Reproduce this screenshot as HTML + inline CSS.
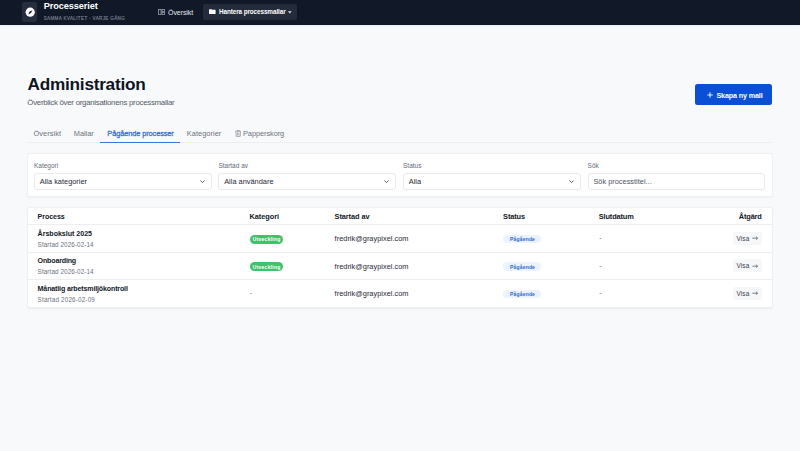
<!DOCTYPE html>
<html><head><meta charset="utf-8"><style>
html,body{margin:0;padding:0;width:800px;height:451px;overflow:hidden;background:#f8f9fb;font-family:"Liberation Sans",sans-serif;}
.t{position:absolute;white-space:nowrap;line-height:1;}
</style></head><body>
<div style="position:absolute;left:0;top:0;width:800px;height:25px;background:#111827;box-shadow:0 1px 2px rgba(0,0,0,0.06)"></div>
<div style="position:absolute;left:21.7px;top:2px;width:15.3px;height:19.7px;border-radius:2px;background:#262d3c"></div>
<svg style="position:absolute;left:24.5px;top:6.5px" width="10.5" height="10.5" viewBox="0 0 10.5 10.5">
<circle cx="5.2" cy="5.2" r="4.6" fill="#fff"/>
<path d="M3.2 7.4 L4.6 4.6 L7.4 3.2 L6 6 Z" fill="#1a2030"/>
</svg>
<svg style="position:absolute;left:158.3px;top:8.7px" width="7" height="6.2" viewBox="0 0 7 6.2">
<rect x="0.4" y="0.4" width="2.6" height="5.4" fill="none" stroke="#9aa1ae" stroke-width="0.8"/>
<rect x="4" y="0.4" width="2.6" height="2.3" fill="none" stroke="#9aa1ae" stroke-width="0.8"/>
<rect x="4" y="3.5" width="2.6" height="2.3" fill="none" stroke="#9aa1ae" stroke-width="0.8"/>
</svg>
<div style="position:absolute;left:202.8px;top:3.8px;width:94.1px;height:16.2px;border-radius:2px;background:#242b3a"></div>
<svg style="position:absolute;left:209.2px;top:9.3px" width="6.6" height="5" viewBox="0 0 7 6" preserveAspectRatio="none">
<path d="M0 0.8 Q0 0.2 0.6 0.2 L2.6 0.2 L3.4 1 L6.4 1 Q7 1 7 1.6 L7 5.4 Q7 6 6.4 6 L0.6 6 Q0 6 0 5.4 Z" fill="#ffffff"/>
</svg>
<svg style="position:absolute;left:287.5px;top:11px" width="4" height="3" viewBox="0 0 4 3"><path d="M0 0.3 L3.6 0.3 L1.8 2.4 Z" fill="#e5e7eb"/></svg>
<div style="position:absolute;left:695.1px;top:83.7px;width:77px;height:21px;border-radius:2.5px;background:#0a4fd4"></div>
<svg style="position:absolute;left:706.5px;top:92px" width="6" height="6" viewBox="0 0 6 6"><path d="M3 0.3 V5.7 M0.3 3 H5.7" stroke="#fff" stroke-width="0.9"/></svg>
<div style="position:absolute;left:27px;top:142px;width:745px;height:1px;background:#eceef1"></div>
<div style="position:absolute;left:100px;top:141.6px;width:80px;height:1.5px;background:#3b72dc"></div>
<svg style="position:absolute;left:234.6px;top:129.8px" width="6.4" height="6.8" viewBox="0 0 6.4 6.8">
<path d="M0.1 1.3 H6.3 M2.2 1.3 V0.5 H4.2 V1.3 M0.9 1.7 L1.2 6.4 H5.2 L5.5 1.7 M2.5 2.6 V5.4 M3.9 2.6 V5.4" stroke="#8a909b" stroke-width="0.75" fill="none"/>
</svg>
<div style="position:absolute;left:27px;top:153px;width:745.6px;height:44px;border-radius:3px;background:#fff;border:0.6px solid #eef0f3;box-sizing:border-box;box-shadow:0 0.5px 1px rgba(0,0,0,0.04)"></div>
<div style="position:absolute;left:34px;top:173px;width:177.6px;height:16.6px;border-radius:3px;background:#fff;border:0.7px solid #e8eaee;box-sizing:border-box"></div>
<svg style="position:absolute;left:200px;top:180px" width="5" height="3.4" viewBox="0 0 5 3.4"><path d="M0.5 0.6 L2.5 2.6 L4.5 0.6" stroke="#4b5563" stroke-width="1" fill="none"/></svg>
<div style="position:absolute;left:218.4px;top:173px;width:177.6px;height:16.6px;border-radius:3px;background:#fff;border:0.7px solid #e8eaee;box-sizing:border-box"></div>
<svg style="position:absolute;left:384.4px;top:180px" width="5" height="3.4" viewBox="0 0 5 3.4"><path d="M0.5 0.6 L2.5 2.6 L4.5 0.6" stroke="#4b5563" stroke-width="1" fill="none"/></svg>
<div style="position:absolute;left:403px;top:173px;width:177.6px;height:16.6px;border-radius:3px;background:#fff;border:0.7px solid #e8eaee;box-sizing:border-box"></div>
<svg style="position:absolute;left:569px;top:180px" width="5" height="3.4" viewBox="0 0 5 3.4"><path d="M0.5 0.6 L2.5 2.6 L4.5 0.6" stroke="#4b5563" stroke-width="1" fill="none"/></svg>
<div style="position:absolute;left:587.6px;top:173px;width:177.6px;height:16.6px;border-radius:3px;background:#fff;border:0.7px solid #e8eaee;box-sizing:border-box"></div>
<div style="position:absolute;left:27px;top:207px;width:745.6px;height:100.6px;border-radius:3px;background:#fff;border:0.6px solid #eef0f3;box-sizing:border-box;box-shadow:0 0.5px 1.5px rgba(0,0,0,0.06)"></div>
<div style="position:absolute;left:27.5px;top:224.2px;width:744px;height:0.7px;background:#eceef1"></div>
<div style="position:absolute;left:27.5px;top:251.5px;width:744px;height:0.7px;background:#eceef1"></div>
<div style="position:absolute;left:27.5px;top:279.0px;width:744px;height:0.7px;background:#eceef1"></div>
<div style="position:absolute;left:249.5px;top:234.6px;width:33.5px;height:9px;border-radius:4.5px;background:#3ec36b"></div>
<div style="position:absolute;left:503px;top:234.6px;width:38.2px;height:8.9px;border-radius:4.5px;background:#ebf3fe"></div>
<div style="position:absolute;left:732.8px;top:231.8px;width:28.8px;height:13.2px;border-radius:2.5px;background:#f6f7f9"></div>
<svg style="position:absolute;left:752px;top:236.0px" width="6.4" height="4.4" viewBox="0 0 6.4 4.4"><path d="M0.3 2.2 H5.6 M3.9 0.6 L5.6 2.2 L3.9 3.8" stroke="#374151" stroke-width="0.65" fill="none"/></svg>
<div style="position:absolute;left:249.5px;top:262.1px;width:33.5px;height:9px;border-radius:4.5px;background:#3ec36b"></div>
<div style="position:absolute;left:503px;top:262.1px;width:38.2px;height:8.9px;border-radius:4.5px;background:#ebf3fe"></div>
<div style="position:absolute;left:732.8px;top:259.3px;width:28.8px;height:13.2px;border-radius:2.5px;background:#f6f7f9"></div>
<svg style="position:absolute;left:752px;top:263.5px" width="6.4" height="4.4" viewBox="0 0 6.4 4.4"><path d="M0.3 2.2 H5.6 M3.9 0.6 L5.6 2.2 L3.9 3.8" stroke="#374151" stroke-width="0.65" fill="none"/></svg>
<div style="position:absolute;left:503px;top:289.6px;width:38.2px;height:8.9px;border-radius:4.5px;background:#ebf3fe"></div>
<div style="position:absolute;left:732.8px;top:286.8px;width:28.8px;height:13.2px;border-radius:2.5px;background:#f6f7f9"></div>
<svg style="position:absolute;left:752px;top:291.0px" width="6.4" height="4.4" viewBox="0 0 6.4 4.4"><path d="M0.3 2.2 H5.6 M3.9 0.6 L5.6 2.2 L3.9 3.8" stroke="#374151" stroke-width="0.65" fill="none"/></svg>
<div class="t" id="t0" style="top:1.81px;font-size:9.2px;color:#ffffff;font-weight:700;letter-spacing:-0.096px;left:43.7px;">Processeriet</div>
<div class="t" id="t1" style="top:17.39px;font-size:4.5px;color:#7a8292;font-weight:400;letter-spacing:0.386px;left:43.7px;-webkit-text-stroke:0.15px #7a8292;">SAMMA KVALITET - VARJE GÅNG</div>
<div class="t" id="t2" style="top:8.87px;font-size:7.0px;color:#e3e6ea;font-weight:400;letter-spacing:-0.067px;left:168px;">Översikt</div>
<div class="t" id="t3" style="top:9.38px;font-size:6.4px;color:#ffffff;font-weight:700;letter-spacing:-0.114px;left:219px;">Hantera processmallar</div>
<div class="t" id="t4" style="top:75.84px;font-size:17.2px;color:#0f1422;font-weight:700;letter-spacing:-0.243px;left:27.6px;">Administration</div>
<div class="t" id="t5" style="top:99.35px;font-size:7.85px;color:#545b69;font-weight:400;letter-spacing:-0.265px;left:27.3px;">Överblick över organisationens processmallar</div>
<div class="t" id="t6" style="top:91.51px;font-size:7.2px;color:#ffffff;font-weight:700;letter-spacing:-0.136px;left:716.4px;">Skapa ny mall</div>
<div class="t" id="t7" style="top:129.94px;font-size:7.4px;color:#6b7280;font-weight:400;letter-spacing:0.062px;left:33.5px;">Översikt</div>
<div class="t" id="t8" style="top:129.94px;font-size:7.4px;color:#6b7280;font-weight:400;letter-spacing:-0.037px;left:73.8px;">Mallar</div>
<div class="t" id="t9" style="top:129.94px;font-size:7.4px;color:#3570d8;font-weight:400;letter-spacing:-0.099px;left:107.3px;-webkit-text-stroke:0.28px #3570d8;">Pågående processer</div>
<div class="t" id="t10" style="top:129.94px;font-size:7.4px;color:#6b7280;font-weight:400;letter-spacing:0.048px;left:186.8px;">Kategorier</div>
<div class="t" id="t11" style="top:129.94px;font-size:7.4px;color:#6b7280;font-weight:400;letter-spacing:-0.067px;left:243px;">Papperskorg</div>
<div class="t" id="t12" style="top:163.10px;font-size:6.5px;color:#646b78;font-weight:400;left:34px;">Kategori</div>
<div class="t" id="t13" style="top:177.94px;font-size:7.4px;color:#1f2937;font-weight:400;left:39.8px;">Alla kategorier</div>
<div class="t" id="t14" style="top:163.10px;font-size:6.5px;color:#646b78;font-weight:400;left:218.4px;">Startad av</div>
<div class="t" id="t15" style="top:177.94px;font-size:7.4px;color:#1f2937;font-weight:400;left:224.20000000000002px;">Alla användare</div>
<div class="t" id="t16" style="top:163.10px;font-size:6.5px;color:#646b78;font-weight:400;left:403px;">Status</div>
<div class="t" id="t17" style="top:177.94px;font-size:7.4px;color:#1f2937;font-weight:400;left:408.8px;">Alla</div>
<div class="t" id="t18" style="top:163.10px;font-size:6.5px;color:#646b78;font-weight:400;left:587.6px;">Sök</div>
<div class="t" id="t19" style="top:177.94px;font-size:7.4px;color:#4b5563;font-weight:400;left:593.4px;">Sök processtitel...</div>
<div class="t" id="t20" style="top:213.59px;font-size:7.1px;color:#111827;font-weight:700;letter-spacing:-0.083px;left:37.6px;">Process</div>
<div class="t" id="t21" style="top:213.34px;font-size:7.4px;color:#111827;font-weight:700;letter-spacing:-0.063px;left:249.5px;">Kategori</div>
<div class="t" id="t22" style="top:213.34px;font-size:7.4px;color:#111827;font-weight:700;letter-spacing:-0.090px;left:334.6px;">Startad av</div>
<div class="t" id="t23" style="top:213.34px;font-size:7.4px;color:#111827;font-weight:700;letter-spacing:-0.131px;left:503.1px;">Status</div>
<div class="t" id="t24" style="top:213.34px;font-size:7.4px;color:#111827;font-weight:700;letter-spacing:-0.150px;left:598.8px;">Slutdatum</div>
<div class="t" id="t25" style="top:213.34px;font-size:7.4px;color:#111827;font-weight:700;letter-spacing:-0.178px;right:38.39999999999998px;">Åtgärd</div>
<div class="t" id="t26" style="top:230.99px;font-size:7.1px;color:#111827;font-weight:700;letter-spacing:-0.029px;left:37.6px;">Årsbokslut 2025</div>
<div class="t" id="t27" style="top:241.57px;font-size:6.3px;color:#6b7280;font-weight:400;letter-spacing:0.104px;left:37.6px;">Startad 2026-02-14</div>
<div class="t" id="t28" style="top:237.37px;font-size:5.0px;color:#ffffff;font-weight:700;letter-spacing:0.245px;left:252.8px;">Utveckling</div>
<div class="t" id="t29" style="top:235.34px;font-size:7.4px;color:#1f2937;font-weight:400;letter-spacing:0.015px;left:334.6px;">fredrik@graypixel.com</div>
<div class="t" id="t30" style="top:237.07px;font-size:5.0px;color:#2f68d4;font-weight:700;letter-spacing:0.182px;left:510px;">Pågående</div>
<div class="t" id="t31" style="top:234.27px;font-size:7.0px;color:#6b7280;font-weight:400;left:599.2px;">-</div>
<div class="t" id="t32" style="top:235.98px;font-size:6.4px;color:#374151;font-weight:400;letter-spacing:0.137px;left:736.5px;">Visa</div>
<div class="t" id="t33" style="top:258.49px;font-size:7.1px;color:#111827;font-weight:700;letter-spacing:-0.177px;left:37.6px;">Onboarding</div>
<div class="t" id="t34" style="top:269.07px;font-size:6.3px;color:#6b7280;font-weight:400;letter-spacing:0.104px;left:37.6px;">Startad 2026-02-14</div>
<div class="t" id="t35" style="top:264.87px;font-size:5.0px;color:#ffffff;font-weight:700;letter-spacing:0.245px;left:252.8px;">Utveckling</div>
<div class="t" id="t36" style="top:262.84px;font-size:7.4px;color:#1f2937;font-weight:400;letter-spacing:0.015px;left:334.6px;">fredrik@graypixel.com</div>
<div class="t" id="t37" style="top:264.57px;font-size:5.0px;color:#2f68d4;font-weight:700;letter-spacing:0.182px;left:510px;">Pågående</div>
<div class="t" id="t38" style="top:261.77px;font-size:7.0px;color:#6b7280;font-weight:400;left:599.2px;">-</div>
<div class="t" id="t39" style="top:263.48px;font-size:6.4px;color:#374151;font-weight:400;letter-spacing:0.137px;left:736.5px;">Visa</div>
<div class="t" id="t40" style="top:285.99px;font-size:7.1px;color:#111827;font-weight:700;letter-spacing:-0.159px;left:37.6px;">Månatlig arbetsmiljökontroll</div>
<div class="t" id="t41" style="top:296.57px;font-size:6.3px;color:#6b7280;font-weight:400;letter-spacing:0.174px;left:37.6px;">Startad 2026-02-09</div>
<div class="t" id="t42" style="top:289.27px;font-size:7.0px;color:#6b7280;font-weight:400;left:249.7px;">-</div>
<div class="t" id="t43" style="top:290.34px;font-size:7.4px;color:#1f2937;font-weight:400;letter-spacing:0.015px;left:334.6px;">fredrik@graypixel.com</div>
<div class="t" id="t44" style="top:292.07px;font-size:5.0px;color:#2f68d4;font-weight:700;letter-spacing:0.182px;left:510px;">Pågående</div>
<div class="t" id="t45" style="top:289.27px;font-size:7.0px;color:#6b7280;font-weight:400;left:599.2px;">-</div>
<div class="t" id="t46" style="top:290.98px;font-size:6.4px;color:#374151;font-weight:400;letter-spacing:0.137px;left:736.5px;">Visa</div>
</body></html>
